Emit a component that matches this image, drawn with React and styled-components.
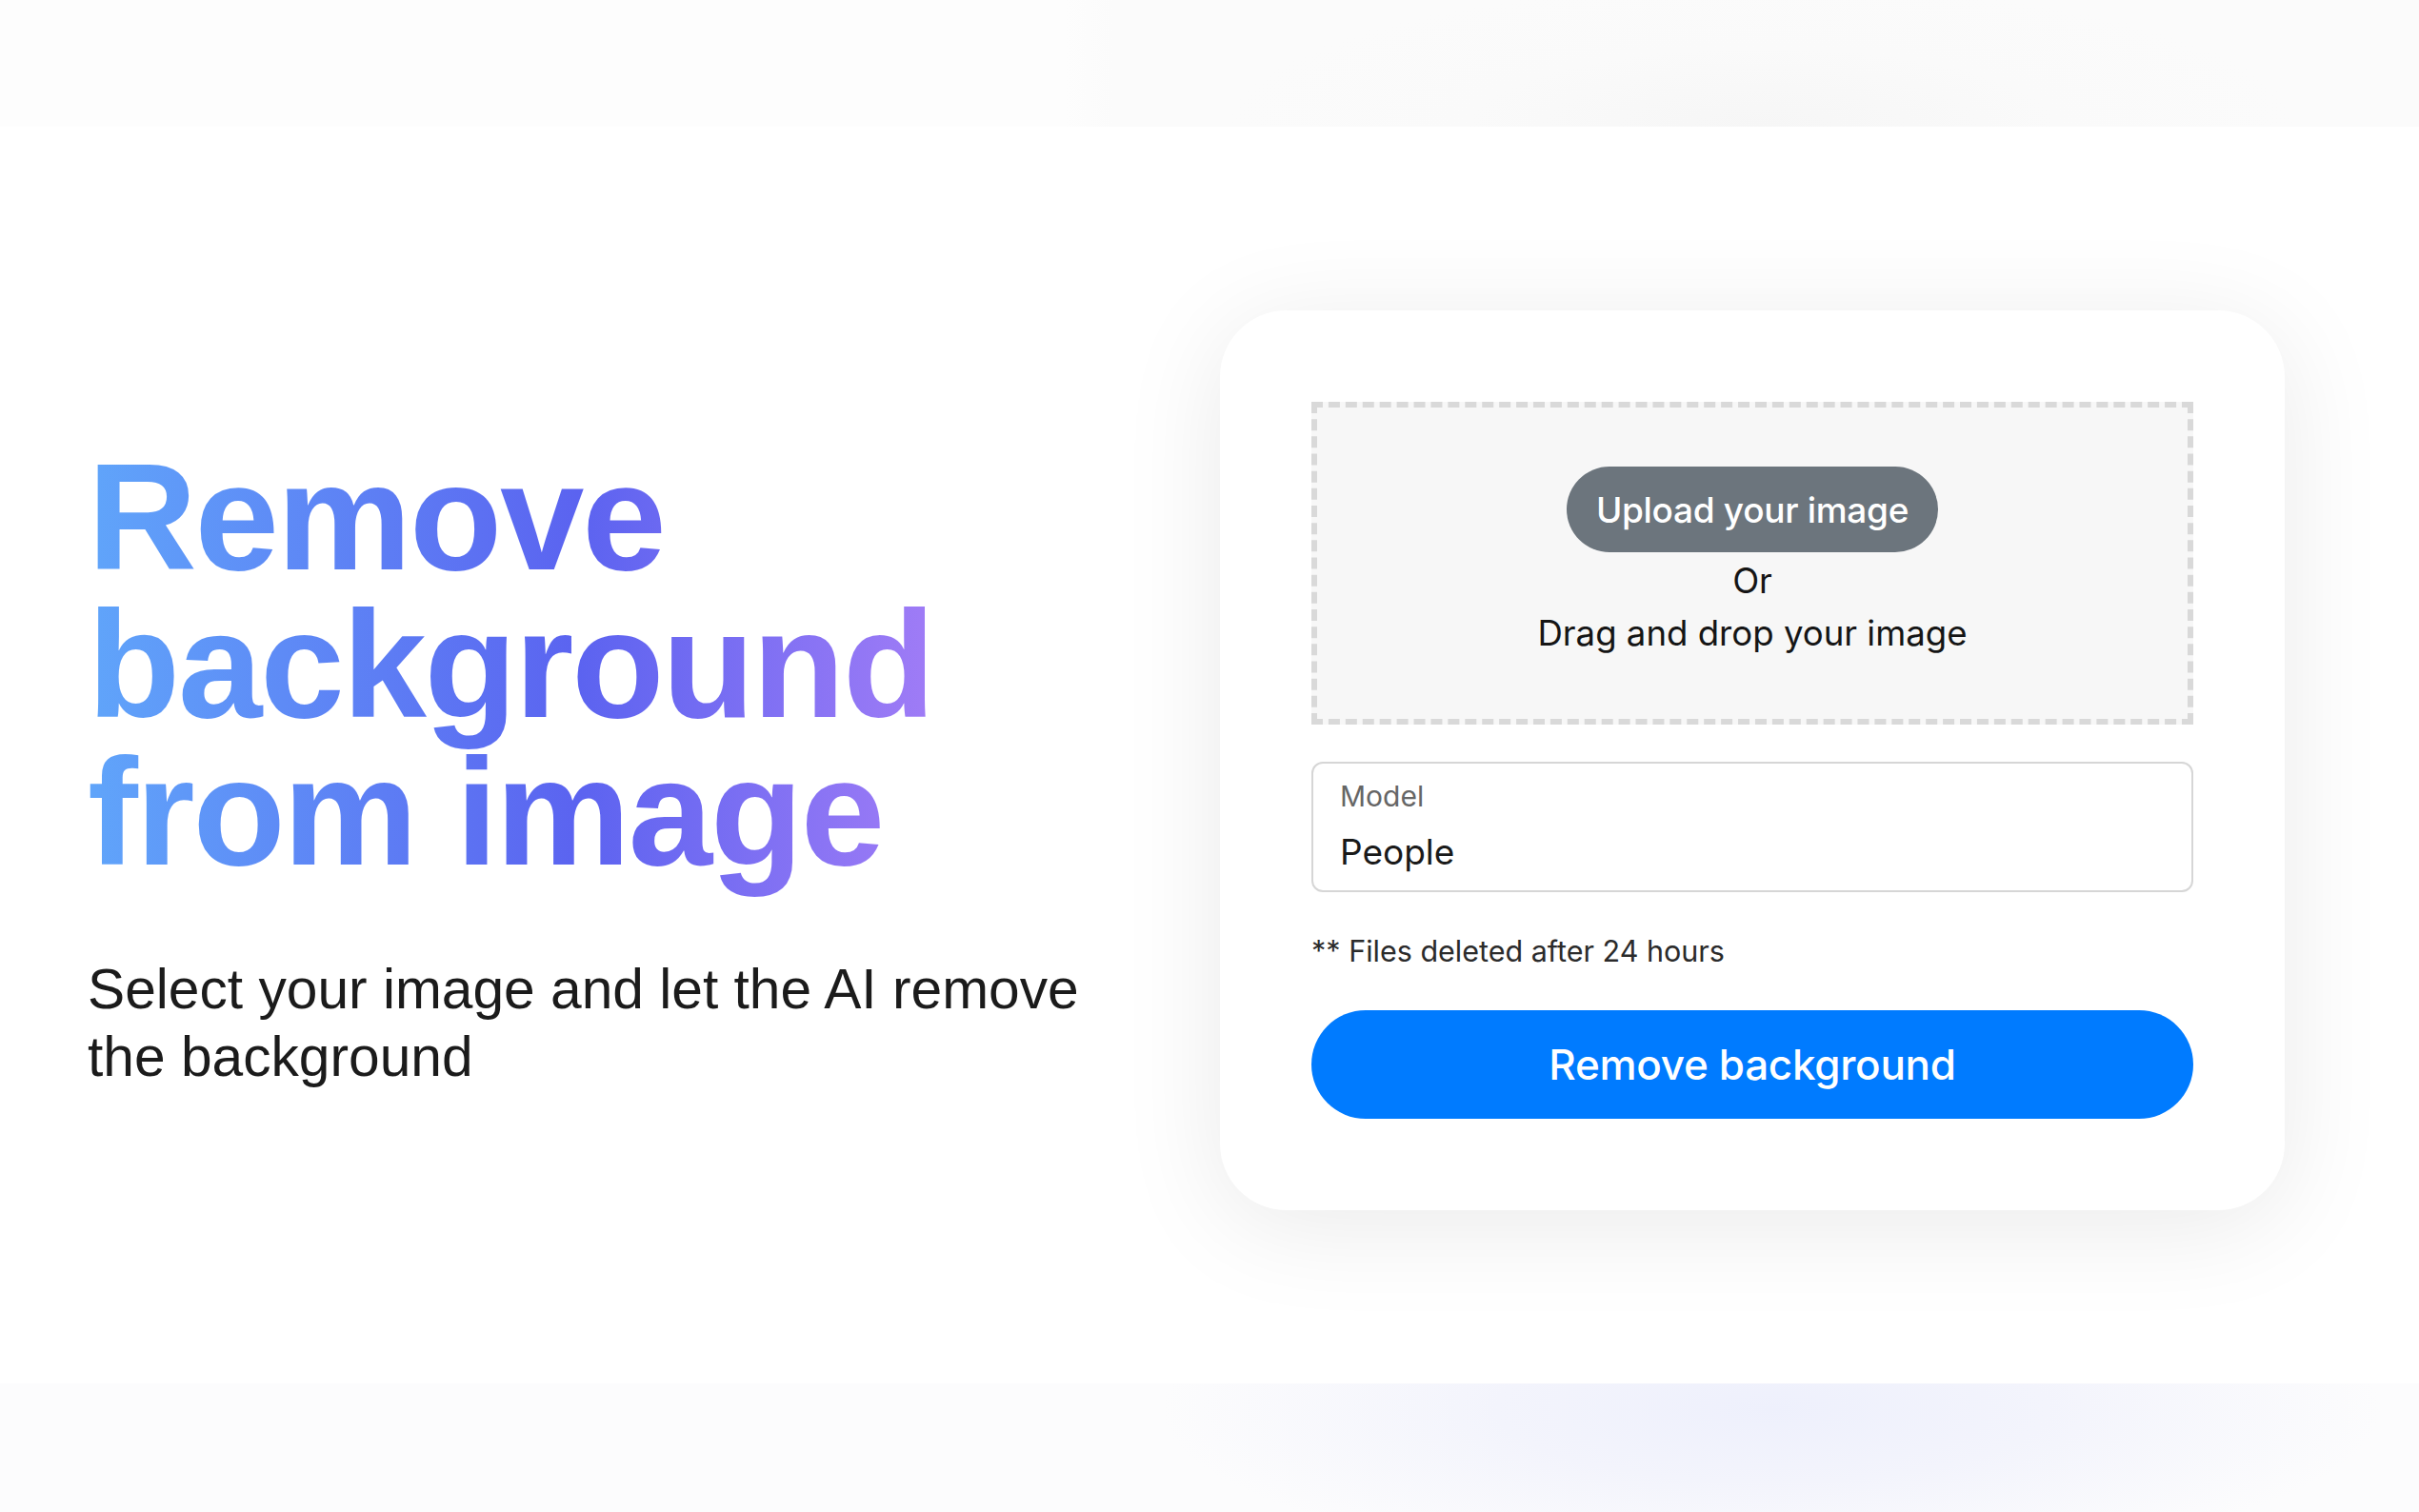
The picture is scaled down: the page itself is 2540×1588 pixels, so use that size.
import React from 'react';
import styled, { createGlobalStyle } from 'styled-components';

const GlobalStyle = createGlobalStyle`
  * { box-sizing: border-box; }
  body {
    margin: 0;
    background: #fefefe;
    font-family: Inter, "Liberation Sans", sans-serif;
    color: #212529;
  }
`;

const Page = styled.div`
  height: 100vh;
  display: flex;
  flex-direction: column;
`;

// faint decorative strips above and below the hero
const TopBand = styled.div`
  height: 133px;
  flex: none;
  background:
    radial-gradient(ellipse 560px 150px at 1850px 100%, #f6f6f6 0%, #fafafa 55%, rgba(251, 251, 251, 0) 100%),
    linear-gradient(90deg, #fdfdfd 0%, #fdfdfd 44%, #fbfbfb 46%, #fbfbfb 100%);
`;

const BottomBand = styled.div`
  height: 135px;
  flex: none;
  background:
    radial-gradient(ellipse 640px 170px at 1860px 20%, #eef0fc 0%, #f3f4fc 45%, rgba(248, 249, 252, 0) 100%),
    #fcfcfd;
`;

const Hero = styled.main`
  flex: 1;
  display: grid;
  grid-template-columns: 1fr 1118px;
  align-items: center;
  padding: 0 141px 0 92px;
  background: #fff;
`;

const Intro = styled.div`
  margin-top: 24px;
`;

const Title = styled.h1`
  margin: 0 0 30px;
  padding-bottom: 42px;
  width: fit-content;
  font-family: "Liberation Sans", Arial, sans-serif;
  font-weight: 700;
  font-size: 159px;
  line-height: 155px;
  letter-spacing: -2.2px;
  background: linear-gradient(90deg, #60a5fa 0%, #5b63f0 58%, #a07cf6 100%);
  -webkit-background-clip: text;
  background-clip: text;
  color: transparent;
`;

const Lead = styled.p`
  margin: 0;
  max-width: 1080px;
  font-family: "Liberation Sans", Arial, sans-serif;
  font-size: 58.7px;
  line-height: 71px;
  color: #1b1b1b;
`;

const Card = styled.section`
  margin-top: 11px;
  padding: 96px;
  background: #fff;
  border-radius: 70px;
  box-shadow: 0 16px 110px rgba(0, 0, 0, 0.085);
  display: flex;
  flex-direction: column;
`;

const DropZone = styled.div`
  height: 339px;
  border: 6px dashed #d9d9d9;
  background: #f7f7f7;
  display: flex;
  flex-direction: column;
  align-items: center;
  justify-content: center;
`;

const PillButton = styled.button`
  border: none;
  border-radius: 999px;
  color: #fff;
  font-family: Inter, "Liberation Sans", sans-serif;
  font-weight: 500;
  cursor: pointer;
  background: ${p => (p.$variant === 'primary' ? '#007bff' : '#6c757d')};
  width: ${p => (p.$variant === 'primary' ? '100%' : '390px')};
  height: ${p => (p.$variant === 'primary' ? '114px' : '90px')};
  font-size: ${p => (p.$variant === 'primary' ? '44px' : '37px')};
  letter-spacing: -0.3px;
`;

const DropText = styled.div`
  font-size: 36.6px;
  line-height: 55px;
  color: #151515;
  &:first-of-type { margin-top: 3px; }
`;

const Field = styled.div`
  margin-top: 39px;
  height: 137px;
  border: 2px solid #d6d6d6;
  border-radius: 12px;
  padding: 14px 0 0 28px;
  display: flex;
  flex-direction: column;
  gap: 15px;
`;

const FieldLabel = styled.label`
  font-size: 30px;
  line-height: 40px;
  color: #666;
`;

const FieldValue = styled.div`
  font-size: 37px;
  line-height: 48px;
  color: #1a1a1a;
`;

const Note = styled.small`
  display: block;
  margin: 39px 0 39px;
  font-size: 30.5px;
  line-height: 46px;
  color: #2b2b2b;
`;

export default function App() {
  return (
    <>
      <GlobalStyle />
      <Page>
        <TopBand />
        <Hero>
          <Intro>
            <Title>
              Remove
              <br />
              background
              <br />
              from image
            </Title>
            <Lead>Select your image and let the AI remove the background</Lead>
          </Intro>
          <Card>
            <DropZone>
              <PillButton>Upload your image</PillButton>
              <DropText>Or</DropText>
              <DropText>Drag and drop your image</DropText>
            </DropZone>
            <Field>
              <FieldLabel>Model</FieldLabel>
              <FieldValue>People</FieldValue>
            </Field>
            <Note>** Files deleted after 24 hours</Note>
            <PillButton $variant="primary">Remove background</PillButton>
          </Card>
        </Hero>
        <BottomBand />
      </Page>
    </>
  );
}
